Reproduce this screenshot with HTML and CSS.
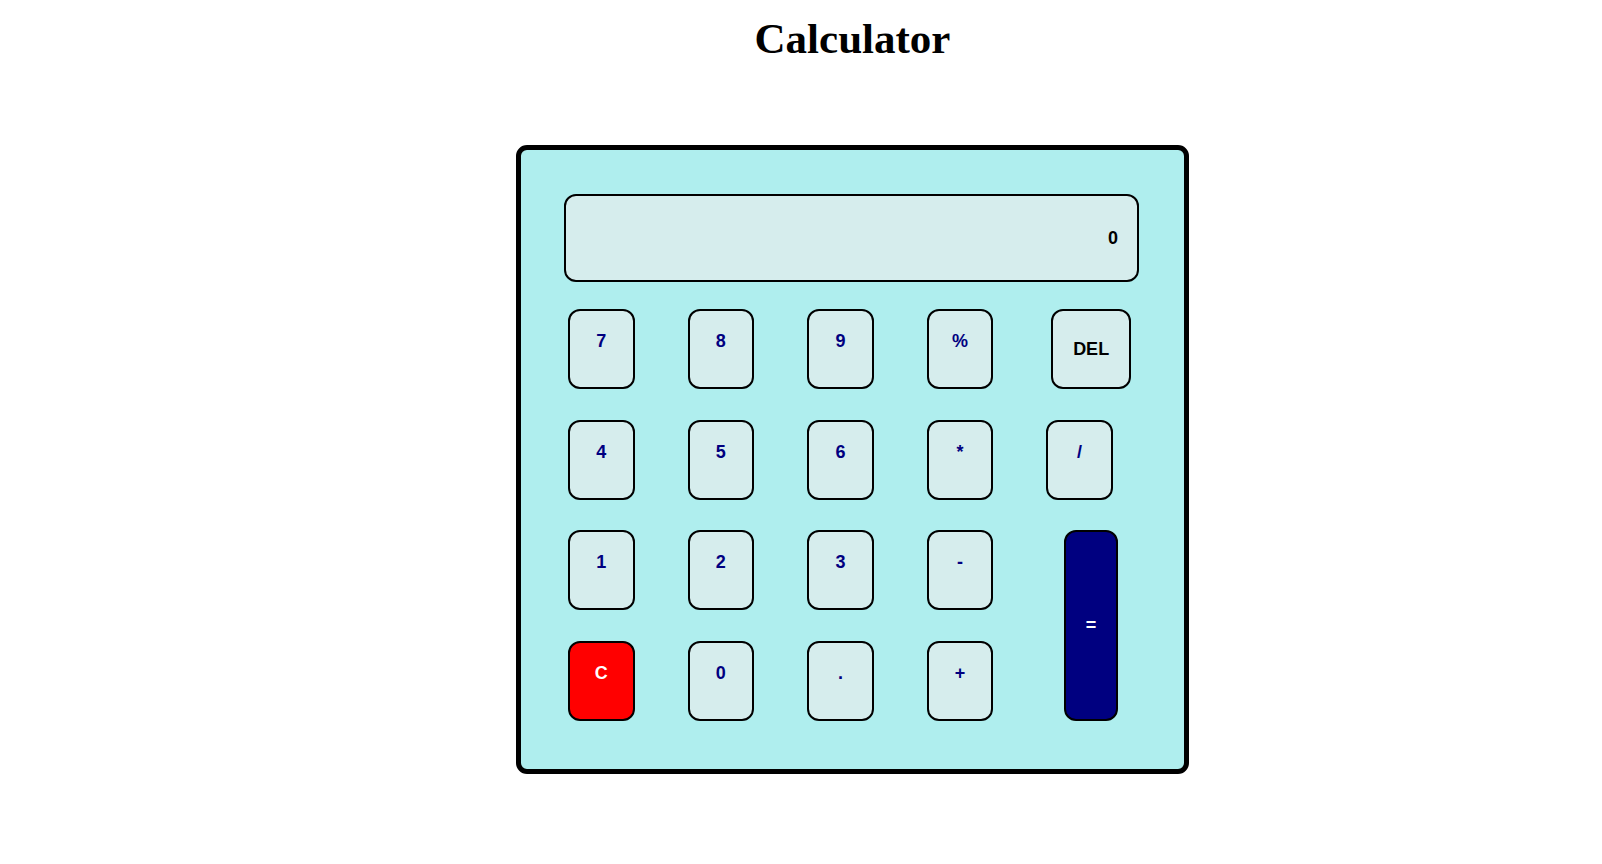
FILE: index.html
```html
<!DOCTYPE html>
<html lang="en">
<head>
<meta charset="utf-8">
<title>Calculator</title>
<link rel="stylesheet" href="styles.css">
</head>
<body>
<div class="page">
  <h1 class="title">Calculator</h1>
  <div class="calc">
    <div class="display">0</div>
    <div class="keys">
      <button class="key">7</button>
      <button class="key">8</button>
      <button class="key">9</button>
      <button class="key">%</button>
      <button class="key key-del">DEL</button>
      <button class="key">4</button>
      <button class="key">5</button>
      <button class="key">6</button>
      <button class="key">*</button>
      <button class="key">/</button>
      <button class="key">1</button>
      <button class="key">2</button>
      <button class="key">3</button>
      <button class="key">-</button>
      <button class="key key-eq">=</button>
      <button class="key key-clear">C</button>
      <button class="key">0</button>
      <button class="key">.</button>
      <button class="key">+</button>
    </div>
  </div>
</div>
</body>
</html>
```
FILE: styles.css
```css
html, body {
  margin: 0;
  padding: 0;
  background: #ffffff;
}

.page {
  margin-left: 103px;
  display: flex;
  flex-direction: column;
  align-items: center;
}

.title {
  margin: 14px 0 0;
  font-family: "Liberation Serif", "Times New Roman", serif;
  font-weight: bold;
  font-size: 43px;
  color: #000;
}

.calc {
  box-sizing: border-box;
  margin-top: 82px;
  width: 673px;
  height: 629px;
  border: 5px solid #000;
  border-radius: 11px;
  background: #afeeee;
  padding: 44px 45px 0 43px;
  font-family: "Liberation Sans", Arial, sans-serif;
}

.display {
  box-sizing: border-box;
  height: 88px;
  border: 2px solid #000;
  border-radius: 12px;
  background: #d6eded;
  display: flex;
  align-items: center;
  justify-content: flex-end;
  padding-right: 19px;
  font-size: 18px;
  font-weight: bold;
  color: #000;
}

.keys {
  margin-top: 27px;
  margin-left: 4px;
  display: grid;
  grid-template-columns: repeat(5, 119.6px);
  grid-auto-rows: 80px;
  row-gap: 30.7px;
}

.key {
  box-sizing: border-box;
  width: 66.5px;
  height: 80px;
  margin: 0;
  padding: 20px 0 0;
  border: 2px solid #000;
  border-radius: 12px;
  background: #d6eded;
  color: #000080;
  font-family: "Liberation Sans", Arial, sans-serif;
  font-size: 18px;
  font-weight: bold;
  line-height: normal;
  display: flex;
  flex-direction: column;
  align-items: center;
  justify-content: flex-start;
}

.key-del {
  width: 79.5px;
  margin-left: 5px;
  padding: 0;
  justify-content: center;
  color: #000;
}

.key-eq {
  grid-column: 5;
  grid-row: 3 / span 2;
  width: 54px;
  height: auto;
  margin-left: 17.6px;
  padding: 0;
  justify-content: center;
  background: #000080;
  color: #ffffff;
}

.key-clear {
  background: #ff0000;
  color: #ffffff;
}
```
